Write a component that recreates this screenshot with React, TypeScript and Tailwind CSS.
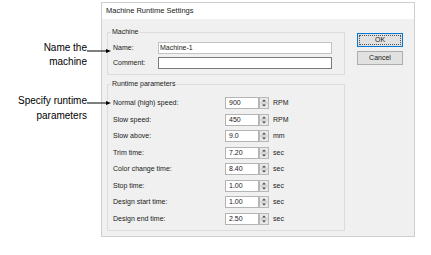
import React from "react";

const rows: [string, string, string][] = [
  ["Normal (high) speed:", "900", "RPM"],
  ["Slow speed:", "450", "RPM"],
  ["Slow above:", "9.0", "mm"],
  ["Trim time:", "7.20", "sec"],
  ["Color change time:", "8.40", "sec"],
  ["Stop time:", "1.00", "sec"],
  ["Design start time:", "1.00", "sec"],
  ["Design end time:", "2.50", "sec"],
];

function Spinner() {
  return (
    <svg width="10" height="12" viewBox="0 0 10 12" className="block">
      <rect x="0.5" y="0.5" width="9" height="11" fill="#e8e8e8" stroke="#b9b9b9" />
      <line x1="1" y1="6" x2="9" y2="6" stroke="#c4c4c4" />
      <path d="M3 4.5 L5 2.5 L7 4.5 Z" fill="#444" />
      <path d="M3 7.5 L5 9.5 L7 7.5 Z" fill="#444" />
    </svg>
  );
}

function Arrow() {
  return (
    <svg width="24" height="6" viewBox="0 0 24 6" className="block">
      <line x1="0" y1="3" x2="20" y2="3" stroke="#000" strokeWidth="1" />
      <path d="M19 1 L24 3 L19 5 Z" fill="#000" />
    </svg>
  );
}

export default function App() {
  return (
    <div className="relative w-[431px] h-[255px] bg-white overflow-hidden font-['Liberation_Sans',Arial,sans-serif] text-black">
      {/* callouts */}
      <div className="absolute left-0 top-[41px] w-[87px] text-right text-[10px] leading-[14px]">
        <div>Name the</div>
        <div>machine</div>
      </div>
      <div className="absolute left-[87px] top-[48px]">
        <Arrow />
      </div>
      <div className="absolute left-0 top-[93px] w-[87px] text-right text-[10px] leading-[15px]">
        <div>Specify runtime</div>
        <div>parameters</div>
      </div>
      <div className="absolute left-[87px] top-[100px]">
        <Arrow />
      </div>

      {/* dialog */}
      <div className="ml-[101px] mt-[2px] w-[314px] border border-[#cfcfcf] bg-[#f0f0f0]">
        <div className="h-[16px] bg-white pl-[4px] flex items-center text-[7.5px] text-[#1a1a1a]">
          Machine Runtime Settings
        </div>
        <div className="flex pl-[5px] pr-[11px] pt-[8px] pb-[5px] text-[7px] text-[#1a1a1a] leading-[10px]">
          <div className="w-[238px] flex flex-col">
            <fieldset className="border border-[#dcdcdc] pl-[5px] pr-[12px] pb-[5px]">
              <legend className="ml-[-2px] px-[1px] leading-[10px]">Machine</legend>
              <div className="mt-[5px] flex items-center h-[12px]">
                <div className="w-[45px]">Name:</div>
                <div className="w-[174px] h-[12px] border border-[#c4c4c4] bg-white pl-[1px] flex items-center">
                  Machine-1
                </div>
              </div>
              <div className="mt-[3px] flex items-center h-[12px]">
                <div className="w-[45px]">Comment:</div>
                <div className="w-[174px] h-[12px] border border-[#7a7a7a] bg-white" />
              </div>
            </fieldset>
            <fieldset className="mt-[4px] border border-[#dcdcdc] pl-[5px] pr-[12px] pb-[5px]">
              <legend className="ml-[-2px] px-[1px] leading-[10px]">Runtime parameters</legend>
              <div className="mt-[8px] flex flex-col gap-[4.57px]">
                {rows.map(([label, value, unit]) => (
                  <div key={label} className="flex items-center h-[12px]">
                    <div className="w-[112px]">{label}</div>
                    <div className="w-[34px] h-[12px] border border-[#b4b4b4] bg-white pl-[3px] flex items-center">
                      {value}
                    </div>
                    <Spinner />
                    <div className="ml-[4px]">{unit}</div>
                  </div>
                ))}
              </div>
            </fieldset>
          </div>
          <div className="ml-[12px] w-[46px] flex flex-col gap-[4px] pt-[6px]">
            <div className="h-[14px] border border-[#0078d7] bg-[#e1e1e1] p-[1px]">
              <div className="h-full border border-dotted border-[#555] flex items-center justify-center">OK</div>
            </div>
            <div className="h-[14px] border border-[#adadad] bg-[#e1e1e1] flex items-center justify-center">
              Cancel
            </div>
          </div>
        </div>
      </div>
    </div>
  );
}
